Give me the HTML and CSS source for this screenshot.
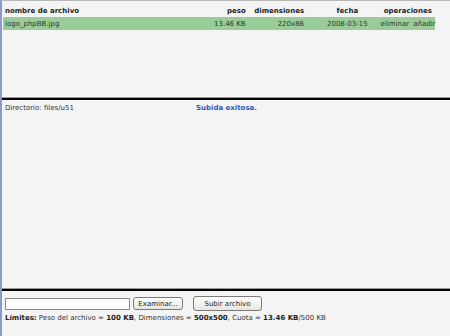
FILE: index.html
```html
<!DOCTYPE html>
<html lang="es">
<head>
    <meta charset="UTF-8">
    <title>Archivos adjuntos</title>
    <link rel="stylesheet" href="styles.css">
</head>
<body>
    <div class="frame">
        <div class="files">
            <table class="file-list">
                <tr>
                    <th class="name">nombre de archivo</th>
                    <th class="size">peso</th>
                    <th class="dims">dimensiones</th>
                    <th class="date">fecha</th>
                    <th class="ops">operaciones</th>
                </tr>
                <tr class="selected">
                    <td class="name">logo_phpBB.jpg</td>
                    <td class="size">13.46 KB</td>
                    <td class="dims">220x86</td>
                    <td class="date">2008-03-15</td>
                    <td class="ops"><span class="op">eliminar</span><span class="op">añadir</span></td>
                </tr>
            </table>
        </div>
        <div class="directory">
            <div class="dir-bar">
                <span class="dir-path">Directorio: files/u51</span>
                <span class="status">Subida exitosa.</span>
            </div>
        </div>
        <form class="upload" action="#" method="POST">
            <div class="upload-row">
                <input type="text" class="file-field">
                <button type="button" class="btn browse">Examinar...</button>
                <button type="submit" class="btn send">Subir archivo</button>
            </div>
            <div class="limits">
                <b>Límites:</b> Peso del archivo = <b>100 KB</b>, Dimensiones = <b>500x500</b>, Cuota = <b>13.46 KB</b>/500 KB
            </div>
        </form>
    </div>
</body>
</html>
```

FILE: styles.css
```css
html, body {
    margin: 0;
    padding: 0;
    height: 100%;
}
body {
    font-family: "DejaVu Sans", Verdana, sans-serif;
    font-size: 7px;
    color: #333;
    background-color: #f4f4f4;
}
.frame {
    height: 336px;
    border-top: 1px solid #b8b8b8;
    border-left: 2px solid #8a9cc4;
    box-sizing: border-box;
    display: flex;
    flex-direction: column;
}
.files {
    flex: none;
    height: 97px;
    padding: 4px 0 0 1px;
    box-sizing: border-box;
    border-bottom: 1px solid #999;
}
.file-list {
    border-collapse: collapse;
    table-layout: fixed;
    width: 432px;
}
.file-list th,
.file-list td {
    box-sizing: border-box;
    white-space: nowrap;
}
.file-list th {
    font-size: 7px;
    font-weight: bold;
    padding: 2px 2px 2px;
    color: #222;
}
.file-list td {
    padding: 3px 2px 2px;
}
.file-list .name { text-align: left; width: 204px; }
.file-list .size { text-align: right; width: 39px; }
.file-list .dims { text-align: right; width: 58px; }
.file-list .date { text-align: center; width: 74px; padding-left: 10px; }
.file-list .ops { text-align: center; width: 54px; padding: 3px 0 2px; }
.file-list th.ops { padding: 2px 0; }
.op + .op {
    margin-left: 4px;
}
.selected {
    background-color: #99cc99;
}
.directory {
    flex: 1;
    border-top: 2px solid #000;
    border-bottom: 1px solid #999;
}
.dir-bar {
    padding: 4px 3px;
    display: flex;
}
.dir-path {
    width: 191px;
}
.status {
    color: #3355bb;
    font-weight: bold;
}
.upload {
    height: 47px;
    flex: none;
    box-sizing: border-box;
    border-top: 2px solid #000;
    padding: 5px 0 0 3px;
}
.upload-row {
    display: flex;
    align-items: center;
}
.file-field {
    width: 125px;
    height: 12px;
    border: 1px solid #8a8a8a;
    background: #fff;
    padding: 0;
    box-sizing: border-box;
}
.btn {
    font-family: inherit;
    font-size: 7px;
    color: #222;
    background: linear-gradient(#fff, #e6e6e0);
    border: 1px solid #7a7a7a;
    border-radius: 3px;
    padding: 0 4px;
    height: 13px;
}
.browse {
    margin-left: 3px;
    width: 50px;
}
.send {
    margin-left: 10px;
    width: 69px;
    height: 15px;
}
.limits {
    margin-top: 3px;
}
.limits b {
    color: #222;
}
```
